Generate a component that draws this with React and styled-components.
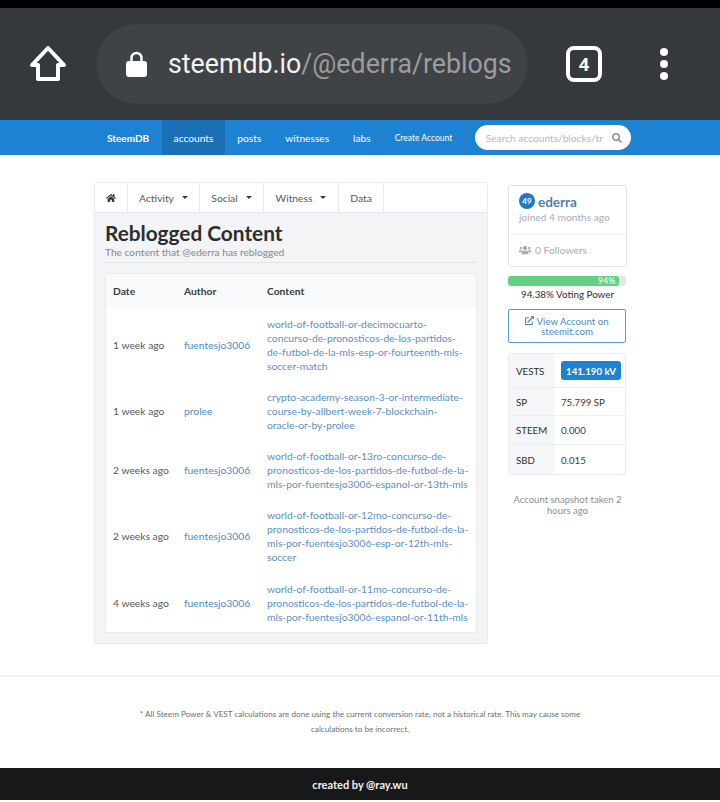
import styled, { createGlobalStyle } from 'styled-components'
import { FaHome, FaUsers, FaExternalLinkAlt, FaSearch } from 'react-icons/fa'

const GlobalStyle = createGlobalStyle`
    html, body {
        margin: 0;
        padding: 0;
        background: #fff;
    }
    body {
        font-family: "Lato", "Liberation Sans", sans-serif;
        color: #373a3c;
    }
    * {
        box-sizing: border-box;
    }
`

const Page = styled.div`
    width: 720px;
    height: 802px;
    overflow: hidden;
    background: #fff;
    border-top: 8px solid #000;
`

const BrowserBar = styled.div`
    height: 112px;
    background: #36393b;
    display: flex;
    align-items: center;
    padding: 0 0 0 29px;
`

const HomeButton = styled.div`
    width: 38px;
    height: 38px;
    margin-right: 29px;
`

const UrlPill = styled.div`
    width: 432px;
    height: 80px;
    border-radius: 40px;
    background: #3f4345;
    display: flex;
    align-items: center;
    padding-left: 30px;
    font-family: "Roboto", sans-serif;
    font-size: 26.75px;
    white-space: nowrap;
`

const LockIcon = styled.svg`
    width: 21px;
    height: 26px;
    margin-right: 21px;
    flex: none;
`

const UrlHost = styled.span`
    color: #f2f2f2;
`

const UrlPath = styled.span`
    color: #9b9d9e;
`

const TabCount = styled.div`
    width: 36px;
    height: 36px;
    margin-left: 38px;
    border: 4px solid #fff;
    border-radius: 8px;
    color: #fff;
    font-family: "Roboto", sans-serif;
    font-weight: 700;
    font-size: 19px;
    display: flex;
    align-items: center;
    justify-content: center;
`

const MoreDots = styled.div`
    margin-left: 58px;
    display: flex;
    flex-direction: column;
    gap: 4px;
`

const Dot = styled.span`
    width: 8px;
    height: 8px;
    border-radius: 50%;
    background: #fff;
`

const NavBar = styled.nav`
    height: 35px;
    background: #1e82d2;
    display: flex;
    align-items: stretch;
    padding-left: 95px;
`

const NavItem = styled.div`
    display: flex;
    align-items: center;
    padding: 0 ${p => p.$pad || 11.5}px;
    color: #fff;
    font-size: ${p => p.$size || 10.2}px;
    font-weight: ${p => (p.$bold ? 700 : 400)};
    background: ${p => (p.$active ? '#1a6fb5' : 'transparent')};
    border-right: 1px solid #2a7fc6;
    white-space: nowrap;
`

const Search = styled.div`
    width: 156px;
    height: 25px;
    margin: 5px 0 0 10px;
    background: #fff;
    border-radius: 13px;
    display: flex;
    align-items: center;
    justify-content: space-between;
    padding: 0 9px 0 11px;
    font-size: 10.2px;
    color: #b5b8ba;
    overflow: hidden;
    white-space: nowrap;
`

const SearchText = styled.span`
    width: 117px;
    overflow: hidden;
`

const Main = styled.main`
    display: flex;
    align-items: flex-start;
    padding: 27px 0 0 94px;
    height: 522px;
    border-bottom: 2px solid #eef0f2;
`

const Panel = styled.section`
    width: 394px;
    height: 462px;
    background: #f2f4f6;
    border: 1px solid #e8eaec;
    border-radius: 3px 3px 0 0;
`

const Tabs = styled.div`
    height: 30px;
    background: #fff;
    display: flex;
    border-bottom: 1px solid #e8eaec;
`

const Tab = styled.div`
    width: ${p => p.$w}px;
    display: flex;
    align-items: center;
    justify-content: center;
    gap: 8px;
    font-size: 10.3px;
    color: #55595c;
    border-right: 1px solid #e8eaec;
`

const Caret = styled.span`
    width: 0;
    height: 0;
    border-left: 3px solid transparent;
    border-right: 3px solid transparent;
    border-top: 3px solid #373a3c;
`

const PanelBody = styled.div`
    padding: 7px 10px 0 10px;
`

const Title = styled.h1`
    margin: 0;
    font-size: 20.8px;
    line-height: 26px;
    font-weight: 700;
    color: #2b2e30;
`

const Subtitle = styled.div`
    font-size: 10.2px;
    line-height: 13px;
    color: #818a91;
    padding-bottom: 3px;
    border-bottom: 1px solid #e2e4e6;
    margin-bottom: 10px;
`

const TableCard = styled.div`
    background: #fff;
    border: 1px solid #e8eaec;
    border-radius: 2px;
    width: 372px;
`

const Table = styled.table`
    width: 100%;
    border-collapse: collapse;
    table-layout: fixed;
    font-size: 10.3px;
`

const HeadCell = styled.th`
    height: 34px;
    padding: 0 0 0 7px;
    text-align: left;
    font-weight: 700;
    color: #373a3c;
    background: #f8f9fa;
    width: ${p => p.$w}px;
`

const Cell = styled.td`
    padding: 0 0 0 7px;
    height: ${p => p.$h}px;
    color: #55595c;
    white-space: nowrap;
`

const LinkCell = styled.td`
    padding: 0 7px 0 7px;
    line-height: 14px;
    color: #5a8fc7;
    white-space: pre-line;
`

const AuthorLink = styled.span`
    color: #4b8ac6;
`

const Side = styled.aside`
    width: 119px;
    margin-left: 20px;
    margin-top: 3px;
`

const ProfileCard = styled.div`
    height: 82px;
    border: 1px solid #dfe2e4;
    border-radius: 3px;
    padding: 7px 10px 0 10px;
`

const NameRow = styled.div`
    display: flex;
    align-items: center;
    gap: 3px;
    height: 16px;
`

const Rep = styled.span`
    width: 16px;
    height: 16px;
    border-radius: 50%;
    background: #1e78c8;
    color: #fff;
    font-size: 8px;
    font-weight: 700;
    display: flex;
    align-items: center;
    justify-content: center;
`

const Name = styled.span`
    padding-top: 1px;
    font-size: 13.5px;
    font-weight: 700;
    color: #4a7fb5;
`

const Joined = styled.div`
    margin: 2px -10px 0 -10px;
    padding: 0 10px 11px 10px;
    font-size: 10.2px;
    color: #a9adb0;
    border-bottom: 1px solid #eef0f1;
`

const Followers = styled.div`
    display: flex;
    align-items: center;
    gap: 4px;
    margin-top: 9px;
    font-size: 10.3px;
    color: #a9adb0;
`

const ProgressTrack = styled.div`
    margin-top: 9px;
    height: 10px;
    width: 118px;
    background: #e4e6e8;
    border-radius: 3px;
`

const ProgressFill = styled.div`
    height: 100%;
    background: #62d282;
    border-radius: 3px;
    color: #fff;
    font-size: 9px;
    line-height: 10px;
    text-align: right;
    padding-right: 4px;
`

const VotingLabel = styled.div`
    margin-top: 0;
    text-align: center;
    font-size: 9.8px;
    line-height: 16px;
    color: #2b2e30;
`

const ViewButton = styled.div`
    margin-top: 7px;
    height: 34px;
    width: 118px;
    border: 1px solid #5b9bd0;
    border-radius: 2px;
    color: #4b8ac6;
    font-size: 9.7px;
    line-height: 10px;
    text-align: center;
    padding-top: 6px;
`

const StatsCard = styled.div`
    margin-top: 10px;
    width: 118px;
    border: 1px solid #eaecee;
    border-radius: 3px;
`

const StatRow = styled.div`
    height: ${p => p.$h || 29}px;
    display: flex;
    align-items: stretch;
    border-bottom: ${p => (p.$last ? 'none' : '1px solid #eef0f1')};
    font-size: 9.7px;
`

const StatLabel = styled.div`
    width: 45px;
    background: #f5f6f7;
    color: #2b2e30;
    display: flex;
    align-items: center;
    padding-left: 7px;
`

const StatValue = styled.div`
    flex: 1;
    display: flex;
    align-items: center;
    padding-left: 7px;
    color: #373a3c;
`

const VestsBadge = styled.span`
    width: 60px;
    height: 19px;
    background: #1e82d2;
    border-radius: 3px;
    color: #fff;
    font-weight: 700;
    display: flex;
    align-items: center;
    justify-content: center;
`

const Snapshot = styled.div`
    margin: 19px auto 0;
    width: 118px;
    text-align: center;
    font-size: 9.5px;
    line-height: 11px;
    color: #8a8f93;
`

const Disclaimer = styled.div`
    height: 91px;
    padding: 30px 135px 0 135px;
    text-align: center;
    font-size: 8.15px;
    line-height: 15px;
    color: #6b7074;
`

const Footer = styled.footer`
    height: 32px;
    background: #16181a;
    color: #f2f2f2;
    font-size: 11px;
    font-weight: 700;
    display: flex;
    align-items: center;
    justify-content: center;
`

const rows = [
    { date: '1 week ago', author: 'fuentesjo3006', h: 73, link: 'world-of-football-or-decimocuarto-concurso-de-pronosticos-de-los-partidos-de-futbol-de-la-mls-esp-or-fourteenth-mls-soccer-match' },
    { date: '1 week ago', author: 'prolee', h: 59, link: 'crypto-academy-season-3-or-intermediate-course-by-allbert-week-7-blockchain-\noracle-or-by-prolee' },
    { date: '2 weeks ago', author: 'fuentesjo3006', h: 59, link: 'world-of-football-or-13ro-concurso-de-pronosticos-de-los-partidos-de-futbol-de-la-mls-por-fuentesjo3006-espanol-or-13th-mls' },
    { date: '2 weeks ago', author: 'fuentesjo3006', h: 74, link: 'world-of-football-or-12mo-concurso-de-pronosticos-de-los-partidos-de-futbol-de-la-mls-por-fuentesjo3006-esp-or-12th-mls-soccer' },
    { date: '4 weeks ago', author: 'fuentesjo3006', h: 59, link: 'world-of-football-or-11mo-concurso-de-pronosticos-de-los-partidos-de-futbol-de-la-mls-por-fuentesjo3006-espanol-or-11th-mls' },
]

function App() {
    return (
        <Page>
            <GlobalStyle />
            <BrowserBar>
                <HomeButton>
                    <svg width="38" height="38" viewBox="0 0 38 38" fill="none" stroke="#fff" strokeWidth="4" strokeLinejoin="round">
                        <path d="M19 3 L35 20 H29 V34 H9 V20 H3 Z" />
                    </svg>
                </HomeButton>
                <UrlPill>
                    <LockIcon viewBox="0 0 21 26">
                        <path d="M5.5 11 V7 a5 5 0 0 1 10 0 V11" fill="none" stroke="#fff" strokeWidth="2.4" />
                        <rect x="0" y="10" width="21" height="16" rx="3" fill="#fff" />
                    </LockIcon>
                    <UrlHost>steemdb.io</UrlHost>
                    <UrlPath>/@ederra/reblogs</UrlPath>
                </UrlPill>
                <TabCount>4</TabCount>
                <MoreDots>
                    <Dot />
                    <Dot />
                    <Dot />
                </MoreDots>
            </BrowserBar>
            <NavBar>
                <NavItem $bold $pad={12} $size={10}>SteemDB</NavItem>
                <NavItem $active>accounts</NavItem>
                <NavItem>posts</NavItem>
                <NavItem>witnesses</NavItem>
                <NavItem>labs</NavItem>
                <NavItem $size={8.5}>Create Account</NavItem>
                <Search>
                    <SearchText>Search accounts/blocks/tr</SearchText>
                    <FaSearch size={10} color="#8a8f93" />
                </Search>
            </NavBar>
            <Main>
                <Panel>
                    <Tabs>
                        <Tab $w={33}><FaHome size={10} color="#373a3c" /></Tab>
                        <Tab $w={72}>Activity<Caret /></Tab>
                        <Tab $w={64}>Social<Caret /></Tab>
                        <Tab $w={75}>Witness<Caret /></Tab>
                        <Tab $w={45}>Data</Tab>
                    </Tabs>
                    <PanelBody>
                        <Title>Reblogged Content</Title>
                        <Subtitle>The content that @ederra has reblogged</Subtitle>
                        <TableCard>
                            <Table>
                                <thead>
                                    <tr>
                                        <HeadCell $w={71}>Date</HeadCell>
                                        <HeadCell $w={83}>Author</HeadCell>
                                        <HeadCell>Content</HeadCell>
                                    </tr>
                                </thead>
                                <tbody>
                                    {rows.map((r, i) => (
                                        <tr key={i}>
                                            <Cell $h={r.h}>{r.date}</Cell>
                                            <Cell $h={r.h}><AuthorLink>{r.author}</AuthorLink></Cell>
                                            <LinkCell>{r.link}</LinkCell>
                                        </tr>
                                    ))}
                                </tbody>
                            </Table>
                        </TableCard>
                    </PanelBody>
                </Panel>
                <Side>
                    <ProfileCard>
                        <NameRow>
                            <Rep>49</Rep>
                            <Name>ederra</Name>
                        </NameRow>
                        <Joined>joined 4 months ago</Joined>
                        <Followers><FaUsers size={12} color="#a9adb0" />0 Followers</Followers>
                    </ProfileCard>
                    <ProgressTrack>
                        <ProgressFill style={{ width: '94.38%' }}>94%</ProgressFill>
                    </ProgressTrack>
                    <VotingLabel>94.38% Voting Power</VotingLabel>
                    <ViewButton><FaExternalLinkAlt size={9} /> View Account on steemit.com</ViewButton>
                    <StatsCard>
                        <StatRow $h={34}><StatLabel>VESTS</StatLabel><StatValue><VestsBadge>141.190 kV</VestsBadge></StatValue></StatRow>
                        <StatRow $h={28}><StatLabel>SP</StatLabel><StatValue>75.799 SP</StatValue></StatRow>
                        <StatRow><StatLabel>STEEM</StatLabel><StatValue>0.000</StatValue></StatRow>
                        <StatRow $last><StatLabel>SBD</StatLabel><StatValue>0.015</StatValue></StatRow>
                    </StatsCard>
                    <Snapshot>Account snapshot taken 2 hours ago</Snapshot>
                </Side>
            </Main>
            <Disclaimer>* All Steem Power &amp; VEST calculations are done using the current conversion rate, not a historical rate. This may cause some calculations to be incorrect.</Disclaimer>
            <Footer>created by @ray.wu</Footer>
        </Page>
    )
}

export default App
